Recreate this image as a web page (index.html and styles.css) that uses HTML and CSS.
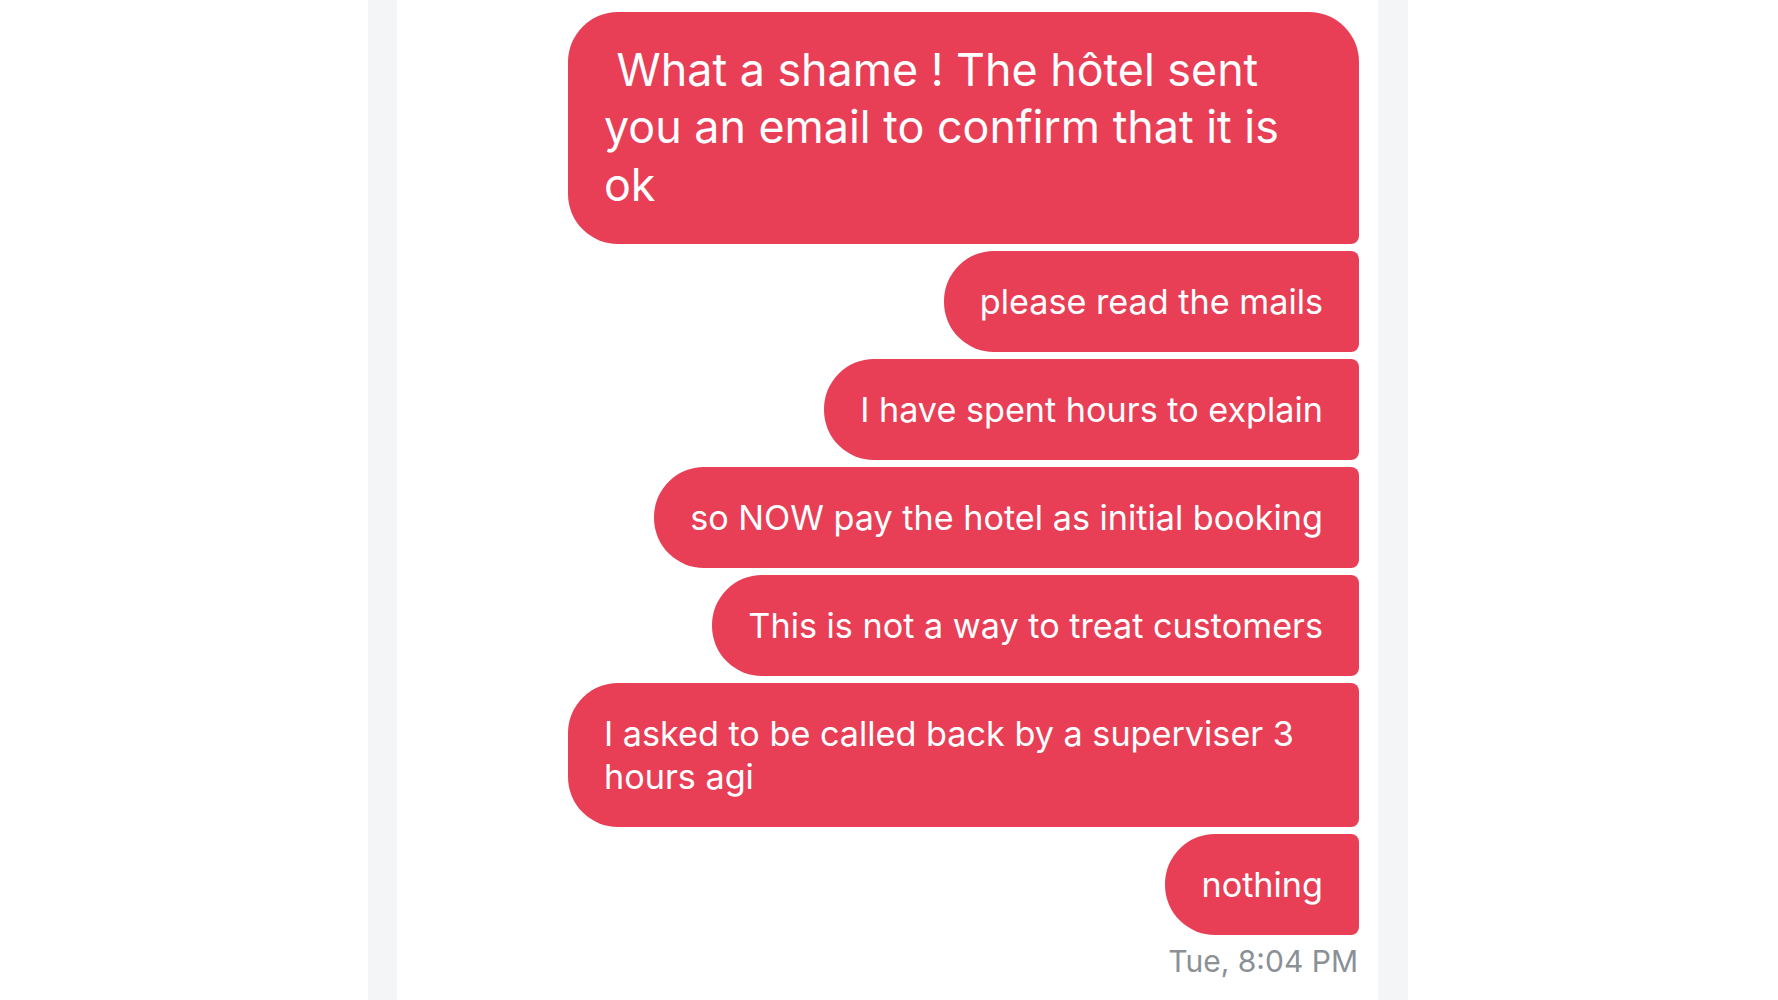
FILE: index.html
```html
<!DOCTYPE html>
<html lang="en">
<head>
<meta charset="utf-8">
<title>Messages</title>
<link rel="stylesheet" href="styles.css">
</head>
<body>
<div class="frame">
  <div class="panel">
    <div class="thread">
      <div class="bubble bubble-first bubble-big">&nbsp;What a shame ! The hôtel sent you an email to confirm that it is ok</div>
      <div class="bubble">please read the mails</div>
      <div class="bubble">I have spent hours to explain</div>
      <div class="bubble">so NOW pay the hotel as initial booking</div>
      <div class="bubble">This is not a way to treat customers</div>
      <div class="bubble">I asked to be called back by a superviser 3 hours agi</div>
      <div class="bubble">nothing</div>
      <div class="stamp">Tue, 8:04 PM</div>
    </div>
  </div>
</div>
</body>
</html>
```

FILE: styles.css
```css
html, body {
  margin: 0;
  padding: 0;
  background: #ffffff;
  height: 100%;
  overflow: hidden;
}

body {
  font-family: "Inter", "Liberation Sans", sans-serif;
}

.frame {
  width: 981px;
  margin: 0 auto;
  padding: 0 30px 0 29px;
  background: #f3f5f7;
  height: 1000px;
  transform: translateX(-1px);
}

.panel {
  background: #ffffff;
  height: 100%;
  padding: 12px 19px 0 19px;
  box-sizing: border-box;
}

.thread {
  display: flex;
  flex-direction: column;
  align-items: flex-end;
  gap: 7px;
}

.bubble {
  max-width: 719px;
  padding: 29px 36px;
  background: #e83f57;
  color: #ffffff;
  font-size: 34.2px;
  line-height: 43px;
  border-radius: 50px 8px 8px 50px;
}

.bubble-big {
  padding: 29.5px 36px;
  font-size: 44.8px;
  line-height: 57.8px;
}

.bubble-first {
  border-radius: 50px 50px 8px 50px;
}

.stamp {
  margin-top: 1px;
  margin-right: 1px;
  font-size: 30px;
  line-height: 36px;
  color: #8a9096;
}
```
